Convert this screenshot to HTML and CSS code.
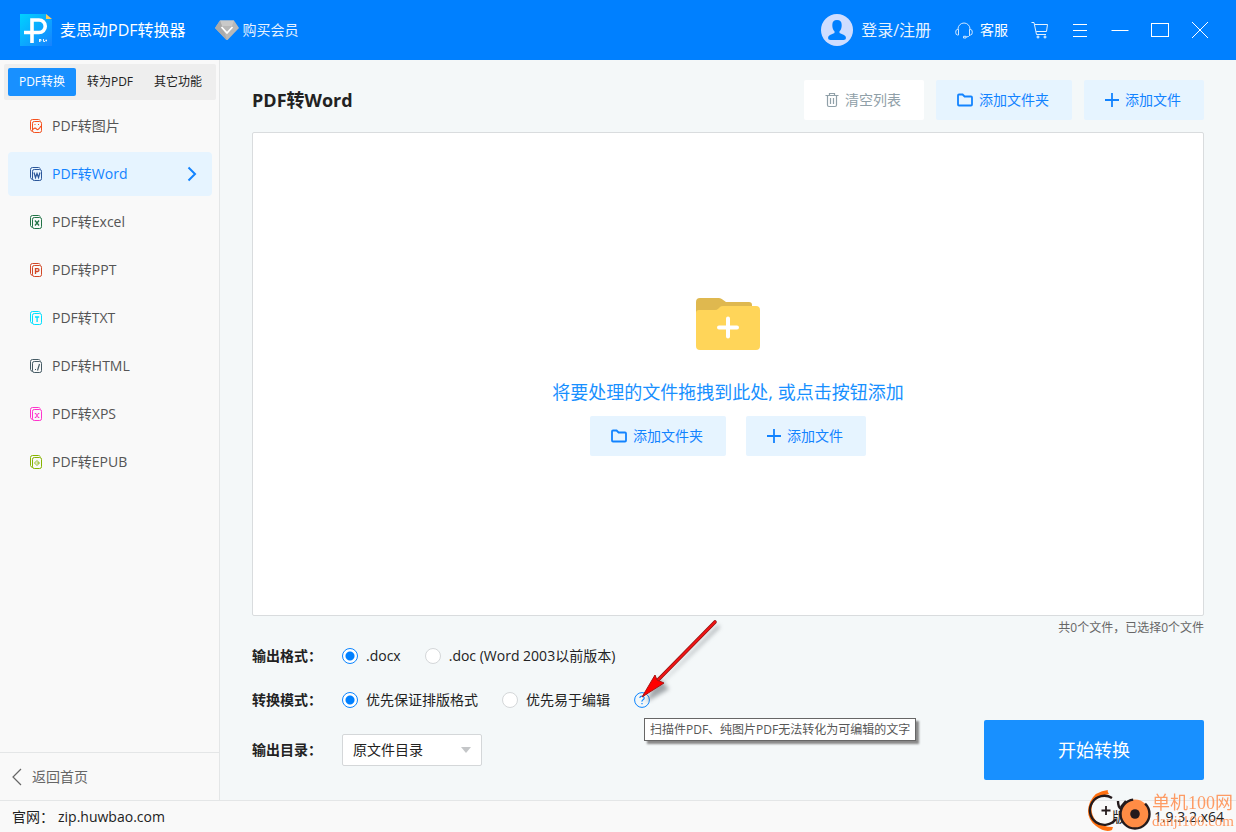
FILE: index.html
```html
<!DOCTYPE html>
<html lang="zh-CN">
<head>
<meta charset="utf-8">
<title>麦思动PDF转换器</title>
<link rel="stylesheet" href="styles.css">
</head>
<body>
<svg class="defs" width="0" height="0" aria-hidden="true">
  <defs>
    <linearGradient id="logo-bg" x1="0" y1="0" x2="1" y2="1"><stop offset="0" stop-color="#00d2ff"/><stop offset="1" stop-color="#1682ff"/></linearGradient>
    <symbol id="i-pages" viewBox="0 0 14 16"><path d="M3.5 13.2H3A2 2 0 0 1 1.500 11.500V3.500Q1.500 1.500 3.500 1.500H9.500Q10.800 1.500 11.200 2.600" fill="none" stroke="currentColor"/><rect x="3.500" y="3.500" width="9" height="11" rx="1.800" fill="none" stroke="currentColor"/></symbol>
    <symbol id="i-folder" viewBox="0 0 16 14"><path d="M1 2.500Q1 1.500 2 1.500H5.600L7.600 3.500H14Q15 3.500 15 4.500V11.500Q15 12.500 14 12.500H2Q1 12.500 1 11.500Z" fill="none" stroke="currentColor" stroke-width="1.800"/></symbol>
    <symbol id="i-plus" viewBox="0 0 14 14"><path d="M7 0V14M0 7H14" stroke="currentColor" stroke-width="1.800"/></symbol>
  </defs>
</svg>
<div class="app">
  <header class="header">
    <svg class="logo" viewBox="0 0 32 32" width="32" height="32"><path d="M0 0H26L32 6V32H0Z" fill="url(#logo-bg)"/><path d="M26 0V5H32Z" fill="#ffc95a"/><path d="M12 29V6H19A5.700 5.700 0 0 1 19 18.500H4" fill="none" stroke="#fff" stroke-width="3.600"/><path d="M19.500 25V28M19.500 25.500H21V27H19.500M23.500 25V27.500H25M25.500 26.500H27M26.200 25.500V27.500" fill="none" stroke="#fff" stroke-width="0.900"/></svg>
    <h1 class="brand">麦思动PDF转换器</h1>
    <a class="member" href="#"><svg viewBox="0 0 24 20" width="24" height="20"><path d="M5 0.500H19L24 8L13 19.500Q12 20.500 11 19.500L0 8Z" fill="#b8b8b8"/><path d="M5 0.500H19L17 6H7Z" fill="#c9c9c9"/><path d="M0 8L5 .5L7 6L12 20L11 19.500Z" fill="#aaa"/><path d="M6.500 7L12 13L17.500 7" fill="none" stroke="#fff" stroke-width="1.800"/></svg>购买会员</a>
    <div class="header-right">
      <a class="login" href="#"><svg viewBox="0 0 32 32" width="32" height="32"><circle cx="16" cy="16" r="16" fill="#cfddff"/><path d="M11.300 11Q11.300 6 16 6T20.700 11Q20.700 15.500 18.500 17.200V19L23 21Q25 22 25 24Q25 26 22.500 26H9.500Q7 26 7 24Q7 22 9 21L13.500 19V17.200Q11.300 15.500 11.300 11Z" fill="#0080ff"/></svg>登录/注册</a>
      <a class="service" href="#"><svg viewBox="0 0 18 18" width="18" height="18"><path d="M3 9V8A6 6 0 0 1 15 8V9M3.500 8.500V14H2.500Q.7 14 .7 11.200T2.500 8.500ZM14.500 8.500V14H15.500Q17.300 14 17.300 11.200T15.500 8.500ZM15 14Q14 16 11 16M8.500 15.300H11V17H8.500Z" fill="none" stroke="#cfe6ff"/></svg>客服</a>
      <button class="icon-btn" aria-label="购物车"><svg viewBox="0 0 18 18" width="18" height="18"><path d="M.5 1.500H3L5.500 13.500H15M4 3.500H16.500L15.500 10.500H5.200" fill="none" stroke="#e5f2ff"/><circle cx="7" cy="16" r="1" fill="none" stroke="#fff"/><circle cx="14" cy="16" r="1" fill="none" stroke="#fff"/></svg></button>
      <button class="icon-btn" aria-label="菜单"><svg viewBox="0 0 16 16" width="16" height="16"><path d="M1 2.500H15M1 8.500H15M1 14.500H15" stroke="#fff"/></svg></button>
      <button class="icon-btn" aria-label="最小化"><svg viewBox="0 0 18 16" width="18" height="16"><path d="M0.500 8.500H17.500" stroke="#fff"/></svg></button>
      <button class="icon-btn" aria-label="最大化"><svg viewBox="0 0 20 16" width="20" height="16"><rect x="1.500" y="1.500" width="17" height="13" fill="none" stroke="#fff"/></svg></button>
      <button class="icon-btn" aria-label="关闭"><svg viewBox="0 0 18 18" width="18" height="18"><path d="M1 1L17 17M17 1L1 17" stroke="#fff"/></svg></button>
    </div>
  </header>

  <div class="body">
    <aside class="sidebar">
      <div class="tabs">
        <button class="tab active">PDF转换</button><button class="tab">转为PDF</button><button class="tab">其它功能</button>
      </div>
      <nav class="menu">
        <a class="item c-img" href="#"><svg viewBox="0 0 14 16" width="14" height="16"><use href="#i-pages"/><path d="M4 11.500Q6 9 7.500 11T12 8M5.500 6.500H6.500M9 6.500H10" fill="none" stroke="currentColor" stroke-width="1.200"/></svg><span>PDF转图片</span></a>
        <a class="item c-word active" href="#"><svg viewBox="0 0 14 16" width="14" height="16"><use href="#i-pages"/><path d="M5 6.500L6.500 11.500L8 7.500L9.500 11.500L11 6.500" fill="none" stroke="currentColor" stroke-width="1.200"/></svg><span>PDF转Word</span><svg class="chevron" viewBox="0 0 10 16" width="10" height="16"><path d="M1.500 1.500L8 8L1.500 14.500" fill="none" stroke="currentColor" stroke-width="2"/></svg></a>
        <a class="item c-excel" href="#"><svg viewBox="0 0 14 16" width="14" height="16"><use href="#i-pages"/><path d="M6 6.500L10 11.500M10 6.500L6 11.500" stroke="currentColor" stroke-width="1.300"/></svg><span>PDF转Excel</span></a>
        <a class="item c-ppt" href="#"><svg viewBox="0 0 14 16" width="14" height="16"><use href="#i-pages"/><path d="M6.500 12V6.700H8.500Q10 6.700 10 8T8.500 9.500H6.500" fill="none" stroke="currentColor" stroke-width="1.300"/></svg><span>PDF转PPT</span></a>
        <a class="item c-txt" href="#"><svg viewBox="0 0 14 16" width="14" height="16"><use href="#i-pages"/><path d="M6 7H10.200M8.100 7V12" stroke="currentColor" stroke-width="1.300"/></svg><span>PDF转TXT</span></a>
        <a class="item c-html" href="#"><svg viewBox="0 0 14 16" width="14" height="16"><use href="#i-pages"/><path d="M10.500 6L8.500 12.500M6 11.500H7" stroke="currentColor" stroke-width="1.200"/></svg><span>PDF转HTML</span></a>
        <a class="item c-xps" href="#"><svg viewBox="0 0 14 16" width="14" height="16"><use href="#i-pages"/><path d="M6.500 7.500L9.500 11.500M9.500 7.500L6.500 11.500M5.800 7.500H7.300M8.800 7.500H10.300M5.800 11.500H7.300M8.800 11.500H10.300" stroke="currentColor"/></svg><span>PDF转XPS</span></a>
        <a class="item c-epub" href="#"><svg viewBox="0 0 14 16" width="14" height="16"><use href="#i-pages"/><path d="M8 6.500L10.500 9L8 11.500L5.500 9ZM7.500 9H10" fill="none" stroke="currentColor" stroke-width="0.900"/></svg><span>PDF转EPUB</span></a>
      </nav>
      <a class="back" href="#"><svg viewBox="0 0 10 18" width="10" height="18"><path d="M9 1L1 9L9 17" fill="none" stroke="#666" stroke-width="1.200"/></svg>返回首页</a>
    </aside>

    <main class="main">
      <div class="toolbar">
        <h2 class="title">PDF转Word</h2>
        <button class="btn clear"><svg viewBox="0 0 14 16" width="14" height="16"><path d="M.5 3.500H13.500M4.500 3V1.500H9.500V3M2.500 4V13Q2.500 14.500 4 14.500H10Q11.500 14.500 11.500 13V4M5.500 6V12M8.500 6V12" fill="none" stroke="currentColor" stroke-width="1.200"/></svg>清空列表</button>
        <button class="btn folder"><svg width="16" height="14"><use href="#i-folder"/></svg>添加文件夹</button>
        <button class="btn"><svg width="14" height="14"><use href="#i-plus"/></svg>添加文件</button>
      </div>
      <section class="drop">
        <svg viewBox="0 0 64 52" width="64" height="52"><path d="M0 4Q0 0 4 0H23Q25 0 26.500 1.500L30 4H53Q56 4 56 7V20H0Z" fill="#dfb84f"/><path d="M0 15Q0 12 3 12H19Q21 12 22.500 10.500L24 9Q25 8 27 8H60Q64 8 64 12V48Q64 52 60 52H4Q0 52 0 48Z" fill="#ffd559"/><path d="M32 20.500V38.500M23 29.500H41" stroke="#fff" stroke-width="4" stroke-linecap="round"/></svg>
        <p class="hint">将要处理的文件拖拽到此处, 或点击按钮添加</p>
        <div class="drop-actions">
          <button class="btn folder"><svg width="16" height="14"><use href="#i-folder"/></svg>添加文件夹</button>
          <button class="btn"><svg width="14" height="14"><use href="#i-plus"/></svg>添加文件</button>
        </div>
      </section>
      <p class="count">共0个文件，已选择0个文件</p>
      <form class="options">
        <div class="fields">
          <div class="row" role="radiogroup" aria-labelledby="l-format">
            <span class="label" id="l-format">输出格式：</span>
            <label class="radio"><input type="radio" name="format" checked>.docx</label>
            <label class="radio"><input type="radio" name="format">.doc (Word 2003以前版本)</label>
          </div>
          <div class="row mode" role="radiogroup" aria-labelledby="l-mode">
            <span class="label" id="l-mode">转换模式：</span>
            <label class="radio"><input type="radio" name="mode" checked>优先保证排版格式</label>
            <label class="radio"><input type="radio" name="mode">优先易于编辑</label>
            <span class="help">
              <svg viewBox="0 0 16 16" width="16" height="16"><circle cx="8" cy="8" r="7.400" fill="none" stroke="#0a84ff"/><path d="M5.800 6Q6 4.200 8 4.200T10.200 6Q10.200 7 9 7.800T8 9.700M8 11V12.300" fill="none" stroke="#0a84ff" stroke-width="1.200"/></svg>
              <span class="tooltip" role="tooltip">扫描件PDF、纯图片PDF无法转化为可编辑的文字</span>
              <svg class="arrow" viewBox="0 0 90 90" width="90" height="90" aria-hidden="true"><path d="M82 9L25 64L31 71L8 84L20 60L24 64L80 7Z" transform="translate(4 4)" fill="#596066" opacity=".55" class="soft"/><path d="M81 8L24 66" stroke="#8e1212" stroke-width="3.600" stroke-linecap="round"/><path d="M81 8L24 66" stroke="#f01414" stroke-width="2.200" stroke-linecap="round"/><path d="M8 83L21 61L23 66L30 69Z" fill="#f00" stroke="#a81414"/></svg>
            </span>
          </div>
          <div class="row">
            <label class="label" for="dir">输出目录：</label>
            <span class="select-wrap"><select id="dir"><option>原文件目录</option></select></span>
          </div>
        </div>
        <button class="start" type="button">开始转换</button>
      </form>
    </main>
  </div>

  <footer class="footer">
    <span>官网：</span><a href="#">zip.huwbao.com</a>
    <span class="version">版本：1.9.3.2.x64</span>
    <div class="watermark">
      <svg viewBox="0 0 64 42" width="64" height="42"><path d="M21 0Q8 1 3 12Q-3 27 9 36Q18 43 25 40L26 37Q15 37 9 31Q2 22 6 13Q11 6 22 4Q20 1 21 0Z" fill="#ff7010"/><path d="M25 8A14.500 14.500 0 1 0 29 29" fill="none" stroke="#241a1c" stroke-width="2.400"/><path d="M19 16V25M14.500 20.500H23.500" fill="none" stroke="#241a1c" stroke-width="1.800"/><path d="M31 11Q31 17 34 19M39 11L34 17" fill="none" stroke="#241a1c" stroke-width="2.400"/><circle cx="48" cy="24" r="14.500" fill="#ff8c45" stroke="#241a1c" stroke-width="2.400" stroke-dasharray="78 13" stroke-dashoffset="12"/><circle cx="48" cy="24" r="4.800" fill="#241a1c"/></svg>
      <div class="wm-text"><span class="wm-name">单机100网</span><span class="wm-site">danji100.com</span></div>
    </div>
  </footer>
</div>
</body>
</html>
```
FILE: styles.css
```css
* { box-sizing: border-box; }
body, h1, h2, p { margin: 0; }
body, button, select {
  font-family: "Open Sans", "Noto Sans CJK SC", sans-serif;
  font-size: 14px;
  line-height: 20px;
  color: #222;
}
button { border: 0; padding: 0; background: none; }
a { color: inherit; text-decoration: none; }
svg { flex: none; }
.defs { position: absolute; }
.app { display: flex; flex-direction: column; min-height: 100vh; }

.header { display: flex; align-items: center; height: 60px; padding: 0 26px 0 20px; background: #0080ff; color: #fff; }
.brand { margin-left: 8px; font-size: 16px; font-weight: 400; line-height: 24px; }
.member { display: flex; align-items: center; gap: 4px; margin-left: 29px; color: #e6f2ff; }
.header-right { display: flex; align-items: center; margin-left: auto; }
.login { display: flex; align-items: center; gap: 8px; font-size: 16px; line-height: 24px; color: #e6f2ff; }
.service { display: flex; align-items: center; gap: 7px; margin: 0 12px 0 24px; }
.icon-btn { display: flex; align-items: center; justify-content: center; width: 40px; height: 40px; }
.icon-btn:last-child { margin-right: -10px; }

.body { display: flex; flex: 1; }
.sidebar { display: flex; flex-direction: column; flex: none; width: 220px; border-right: 1px solid #e4e6e7; background: #f9f9f9; }
.tabs { display: flex; margin: 4px 3px 4px 4px; padding: 4px; border-radius: 2px; background: #eee; }
.tab { flex: 1; height: 28px; border-radius: 2px; font-size: 12px; }
.tab.active { background: #1890ff; color: #fff; }
.menu { display: flex; flex-direction: column; gap: 4px; padding: 0 7px 0 8px; }
.item { display: flex; align-items: center; height: 44px; padding: 0 15px 0 21px; border-radius: 4px; }
.item span { flex: 1; margin-left: 9px; color: #555; }
.item.active { background: #e6f4ff; }
.item.active span, .chevron { color: #1283ff; }
.c-img { color: #f4511e; }
.c-word { color: #2b579a; }
.c-excel { color: #217346; }
.c-ppt { color: #d24726; }
.c-txt { color: #00e0ff; }
.c-html { color: #455a64; }
.c-xps { color: #ff33cc; }
.c-epub { color: #86b300; }
.back { display: flex; align-items: center; gap: 10px; height: 48px; margin-top: auto; padding-left: 12px; border-top: 1px solid #e4e6e7; color: #666; }

.main { display: flex; flex-direction: column; flex: 1; padding: 20px 32px; background: #f4f8f9; }
.toolbar { display: flex; align-items: center; gap: 12px; margin-bottom: 12px; }
.title { margin-right: auto; font-size: 18px; line-height: 24px; font-weight: 700; }
.btn { display: flex; align-items: center; justify-content: center; gap: 6px; width: 120px; height: 40px; padding-right: 2px; border-radius: 2px; background: #e6f4ff; color: #1283ff; }
.btn.folder { width: 136px; }
.btn.clear { background: #fff; color: #90a0a8; }
.drop { display: flex; flex-direction: column; align-items: center; justify-content: center; flex: 1; padding-top: 6px; border: 1px solid #d9dcde; border-radius: 2px; background: #fff; }
.hint { margin: 28px 0 10px; font-size: 18px; line-height: 28px; color: #1890ff; }
.drop-actions { display: flex; gap: 20px; }
.count { font-size: 12px; line-height: 24px; text-align: right; color: #666; }
.options { display: flex; align-items: flex-end; justify-content: space-between; }
.fields { padding-bottom: 14px; }
.row { display: flex; align-items: center; gap: 24px; height: 32px; margin-bottom: 12px; }
.row.mode { margin-bottom: 18px; }
.row:last-child { margin-bottom: 0; }
.label { width: 90px; margin-right: -24px; font-weight: 600; white-space: nowrap; }
.radio { display: flex; align-items: center; gap: 8px; }
.radio input { width: 16px; height: 16px; margin: 0; appearance: none; border: 1px solid #d4d7d9; border-radius: 50%; background: #fff; }
.radio input:checked { border-color: #0a84ff; background: radial-gradient(circle, #0080ff 4px, #fff 5px); }
.help { position: relative; display: flex; }
.tooltip { position: absolute; z-index: 1; top: 26px; left: 10px; padding: 0 5px; border: 1px solid #666; background: #fff; box-shadow: 3px 3px 2px #888; font-size: 12px; line-height: 21px; white-space: nowrap; color: #575757; }
.arrow { position: absolute; z-index: 2; left: 0; bottom: 4px; pointer-events: none; }
.soft { filter: blur(2px); }
.select-wrap { position: relative; display: flex; }
.select-wrap::after { content: ""; position: absolute; right: 11px; top: 13px; border: 5px solid transparent; border-top: 6px solid #c4c6c8; border-bottom: 0; pointer-events: none; }
select { width: 140px; height: 32px; padding: 0 10px; appearance: none; border: 1px solid #d4d7d9; border-radius: 2px; background: #fff; }
.start { width: 220px; height: 60px; border-radius: 2px; background: #1890ff; color: #fff; font-size: 18px; }

.footer { position: relative; display: flex; align-items: center; height: 32px; padding: 0 12px; border-top: 1px solid #e4e6e7; background: #f9f9f9; }
.footer a { margin-left: 4px; }
.version { margin-left: auto; }
.watermark { position: absolute; right: 2px; bottom: 0; display: flex; align-items: center; gap: 1px; color: #ff8c4c; }
.wm-text { display: flex; flex-direction: column; opacity: .85; }
.wm-name { font-family: "Liberation Serif", "Noto Sans CJK SC", serif; font-size: 18px; line-height: 20px; }
.wm-site { font-family: "Liberation Serif", serif; font-size: 15px; line-height: 16px; }
```
